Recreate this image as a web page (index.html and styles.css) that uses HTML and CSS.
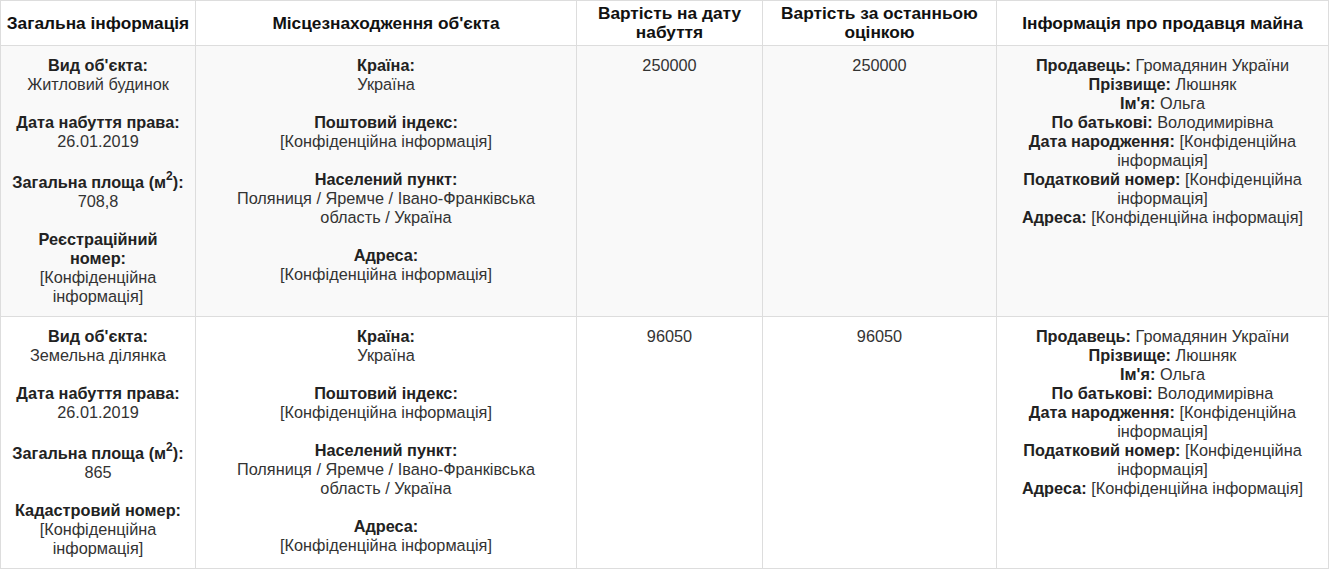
FILE: index.html
```html
<!DOCTYPE html>
<html lang="uk">
<head>
<meta charset="utf-8">
<title>Майно</title>
<link rel="stylesheet" href="styles.css">
</head>
<body>
<table class="assets">
  <colgroup>
    <col class="c1">
    <col class="c2">
    <col class="c3">
    <col class="c4">
    <col class="c5">
  </colgroup>
  <thead>
    <tr>
      <th>Загальна інформація</th>
      <th>Місцезнаходження об'єкта</th>
      <th>Вартість на дату набуття</th>
      <th>Вартість за останньою оцінкою</th>
      <th>Інформація про продавця майна</th>
    </tr>
  </thead>
  <tbody>
    <tr class="odd">
      <td>
        <div class="blk"><b>Вид об'єкта:</b><br>Житловий будинок</div>
        <div class="blk"><b>Дата набуття права:</b><br>26.01.2019</div>
        <div class="blk"><b>Загальна площа (м<sup>2</sup>):</b><br>708,8</div>
        <div class="blk"><b>Реєстраційний номер:</b><br>[Конфіденційна інформація]</div>
      </td>
      <td class="loc">
        <div class="blk"><b>Країна:</b><br>Україна</div>
        <div class="blk"><b>Поштовий індекс:</b><br>[Конфіденційна інформація]</div>
        <div class="blk"><b>Населений пункт:</b><br>Поляниця / Яремче / Івано-Франківська область / Україна</div>
        <div class="blk"><b>Адреса:</b><br>[Конфіденційна інформація]</div>
      </td>
      <td>250000</td>
      <td>250000</td>
      <td>
        <div><b>Продавець:</b> Громадянин України</div>
        <div><b>Прізвище:</b> Люшняк</div>
        <div><b>Ім'я:</b> Ольга</div>
        <div><b>По батькові:</b> Володимирівна</div>
        <div><b>Дата народження:</b> [Конфіденційна інформація]</div>
        <div><b>Податковий номер:</b> [Конфіденційна інформація]</div>
        <div><b>Адреса:</b> [Конфіденційна інформація]</div>
      </td>
    </tr>
    <tr>
      <td>
        <div class="blk"><b>Вид об'єкта:</b><br>Земельна ділянка</div>
        <div class="blk"><b>Дата набуття права:</b><br>26.01.2019</div>
        <div class="blk"><b>Загальна площа (м<sup>2</sup>):</b><br>865</div>
        <div class="blk"><b>Кадастровий номер:</b><br>[Конфіденційна інформація]</div>
      </td>
      <td class="loc">
        <div class="blk"><b>Країна:</b><br>Україна</div>
        <div class="blk"><b>Поштовий індекс:</b><br>[Конфіденційна інформація]</div>
        <div class="blk"><b>Населений пункт:</b><br>Поляниця / Яремче / Івано-Франківська область / Україна</div>
        <div class="blk"><b>Адреса:</b><br>[Конфіденційна інформація]</div>
      </td>
      <td>96050</td>
      <td>96050</td>
      <td>
        <div><b>Продавець:</b> Громадянин України</div>
        <div><b>Прізвище:</b> Люшняк</div>
        <div><b>Ім'я:</b> Ольга</div>
        <div><b>По батькові:</b> Володимирівна</div>
        <div><b>Дата народження:</b> [Конфіденційна інформація]</div>
        <div><b>Податковий номер:</b> [Конфіденційна інформація]</div>
        <div><b>Адреса:</b> [Конфіденційна інформація]</div>
      </td>
    </tr>
  </tbody>
</table>
</body>
</html>
```

FILE: styles.css
```css
html, body {
  margin: 0;
  padding: 0;
  background: #fff;
}

body {
  font-family: "Liberation Sans", Arial, sans-serif;
  font-size: 16.3px;
  line-height: 19px;
  color: #333;
}

.assets {
  border-collapse: collapse;
  table-layout: fixed;
  width: 1329px;
}

.c1 { width: 195px; }
.c2 { width: 381px; }
.c3 { width: 186px; }
.c4 { width: 234px; }
.c5 { width: 332px; }

.assets th,
.assets td {
  border: 1px solid #ddd;
  text-align: center;
}

.assets th {
  font-size: 17.3px;
  font-weight: bold;
  color: #111;
  padding: 3px 1px;
  vertical-align: middle;
}

.assets td {
  padding: 10px 9px;
  vertical-align: top;
}

.assets td.loc {
  padding-left: 14px;
  padding-right: 14px;
}

.assets tr.odd td {
  background: #f9f9f9;
}

.assets b {
  color: #222;
}

.blk + .blk {
  margin-top: 19px;
}

sup {
  font-size: 12px;
  line-height: 1;
  vertical-align: 8px;
}
```
